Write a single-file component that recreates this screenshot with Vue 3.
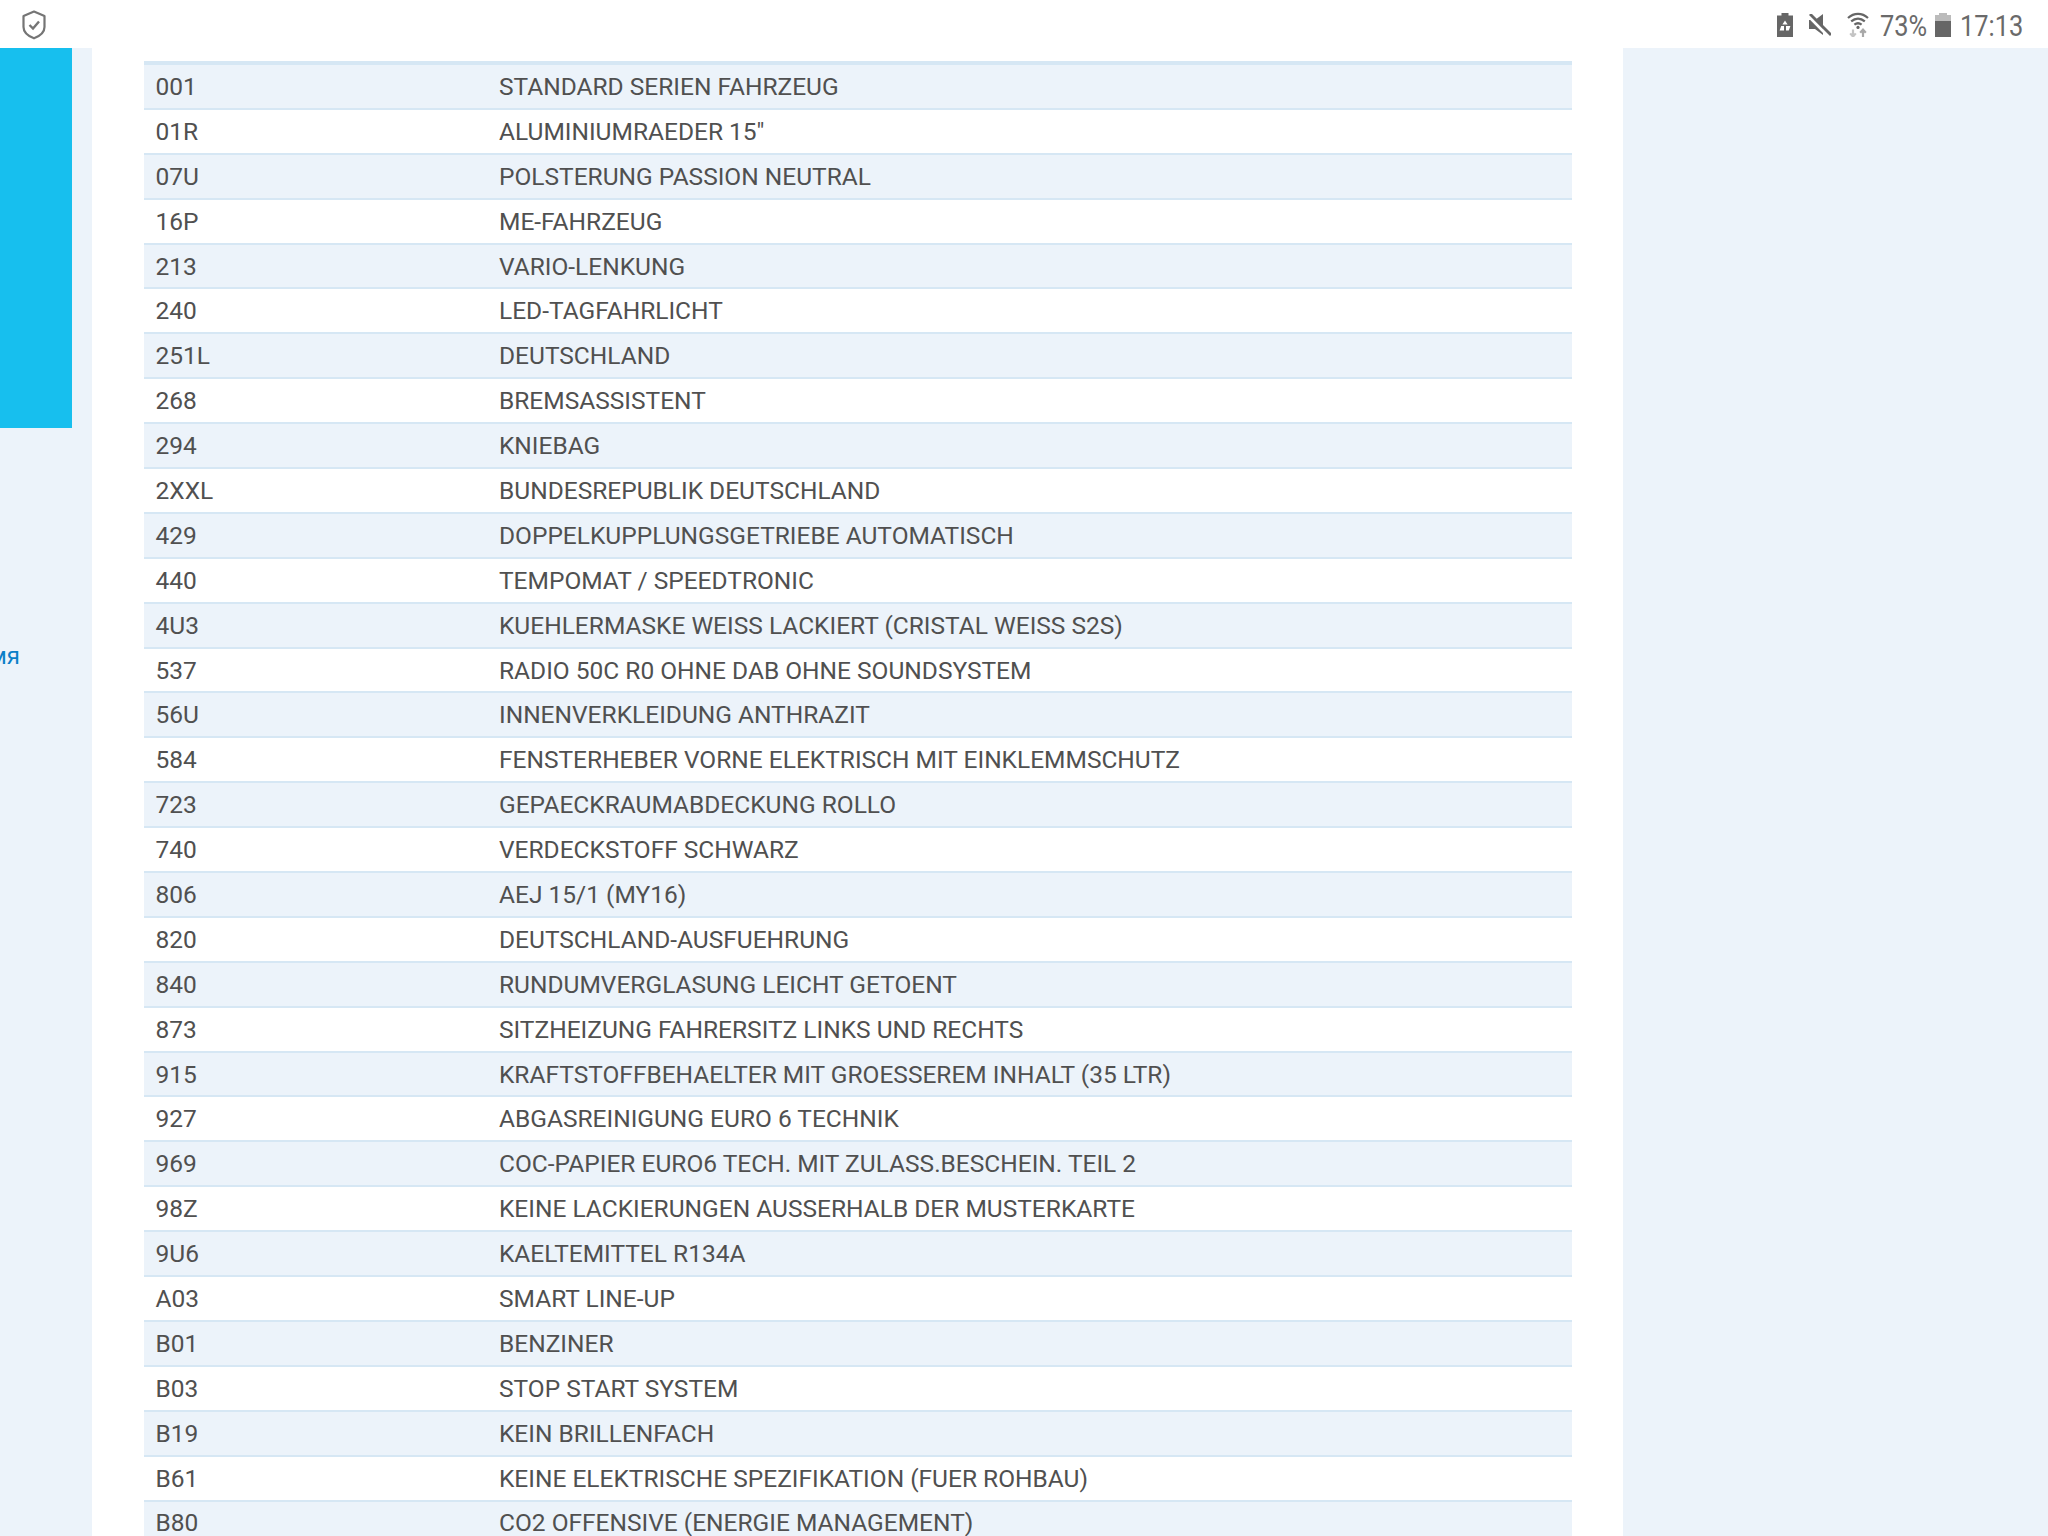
<script setup>
const rows = [
  ['001', 'STANDARD SERIEN FAHRZEUG'],
  ['01R', 'ALUMINIUMRAEDER 15"'],
  ['07U', 'POLSTERUNG PASSION NEUTRAL'],
  ['16P', 'ME-FAHRZEUG'],
  ['213', 'VARIO-LENKUNG'],
  ['240', 'LED-TAGFAHRLICHT'],
  ['251L', 'DEUTSCHLAND'],
  ['268', 'BREMSASSISTENT'],
  ['294', 'KNIEBAG'],
  ['2XXL', 'BUNDESREPUBLIK DEUTSCHLAND'],
  ['429', 'DOPPELKUPPLUNGSGETRIEBE AUTOMATISCH'],
  ['440', 'TEMPOMAT / SPEEDTRONIC'],
  ['4U3', 'KUEHLERMASKE WEISS LACKIERT (CRISTAL WEISS S2S)'],
  ['537', 'RADIO 50C R0 OHNE DAB OHNE SOUNDSYSTEM'],
  ['56U', 'INNENVERKLEIDUNG ANTHRAZIT'],
  ['584', 'FENSTERHEBER VORNE ELEKTRISCH MIT EINKLEMMSCHUTZ'],
  ['723', 'GEPAECKRAUMABDECKUNG ROLLO'],
  ['740', 'VERDECKSTOFF SCHWARZ'],
  ['806', 'AEJ 15/1 (MY16)'],
  ['820', 'DEUTSCHLAND-AUSFUEHRUNG'],
  ['840', 'RUNDUMVERGLASUNG LEICHT GETOENT'],
  ['873', 'SITZHEIZUNG FAHRERSITZ LINKS UND RECHTS'],
  ['915', 'KRAFTSTOFFBEHAELTER MIT GROESSEREM INHALT (35 LTR)'],
  ['927', 'ABGASREINIGUNG EURO 6 TECHNIK'],
  ['969', 'COC-PAPIER EURO6 TECH. MIT ZULASS.BESCHEIN. TEIL 2'],
  ['98Z', 'KEINE LACKIERUNGEN AUSSERHALB DER MUSTERKARTE'],
  ['9U6', 'KAELTEMITTEL R134A'],
  ['A03', 'SMART LINE-UP'],
  ['B01', 'BENZINER'],
  ['B03', 'STOP START SYSTEM'],
  ['B19', 'KEIN BRILLENFACH'],
  ['B61', 'KEINE ELEKTRISCHE SPEZIFIKATION (FUER ROHBAU)'],
  ['B80', 'CO2 OFFENSIVE (ENERGIE MANAGEMENT)'],
]
</script>

<template>
  <div class="page">
    <header class="status">
      <svg class="shield" width="26" height="30" viewBox="0 0 26 30" fill="none" stroke="#757575">
        <path d="M13 1.5 L23.5 6 V17 C23.5 22 19 26 13 28.3 C7 26 2.5 22 2.5 17 V6 Z" stroke-width="2.2" stroke-linejoin="round" />
        <path d="M8.5 15 L12 18.5 L18 11.5" stroke-width="2.4" />
      </svg>
      <div class="tray">
        <svg width="16" height="24" viewBox="0 0 16 24" class="i-saver">
          <path d="M4.5 0 H11.5 V2.5 H16 V24 H0 V2.5 H4.5 Z" fill="#666" />
          <path d="M8 7.5 L10.6 11.4 H5.4 Z M4.2 13 H7 V17.5 H2.6 Z M9 13 H13.4 L11.8 17.5 H9 Z" fill="#fff" />
        </svg>
        <svg width="22" height="22" viewBox="0 0 22 22" class="i-mute">
          <path d="M0 6 H6 L14 0 V21 L6 15 H0 Z" fill="#666" />
          <path d="M0 2.6 L19 22" stroke="#fff" stroke-width="3" />
          <path d="M1 0 L22 21" stroke="#666" stroke-width="2.8" />
        </svg>
        <svg width="22" height="25" viewBox="0 0 22 25" class="i-wifi" fill="none">
          <path d="M1 6 C7 0.5 15 0.5 21 6" stroke="#666" stroke-width="2.2" />
          <path d="M4.2 9.4 C8.4 5.8 13.6 5.8 17.8 9.4" stroke="#666" stroke-width="2.2" />
          <path d="M7.4 12.6 C9.8 10.8 12.2 10.8 14.6 12.6" stroke="#666" stroke-width="2.2" />
          <circle cx="11" cy="15.4" r="1.6" fill="#666" />
          <path d="M6 17.5 V24 M3.2 21.4 L6 24.6 L8.8 21.4" stroke="#c4c4c4" stroke-width="2.2" />
          <path d="M16 25 V18 M13.2 20.8 L16 17.6 L18.8 20.8" stroke="#a8a8a8" stroke-width="2.2" />
        </svg>
        <span class="pct">73%</span>
        <div class="battery"><i class="cap"></i><i class="empty"></i><i class="fill"></i></div>
        <span class="time">17:13</span>
      </div>
    </header>
    <div class="body">
      <aside class="left">
        <div class="cyan"></div>
        <a class="link"><span>имя</span></a>
      </aside>
      <main class="center">
        <table class="spec">
          <tbody>
            <tr v-for="r in rows" :key="r[0]">
              <td class="code">{{ r[0] }}</td>
              <td>{{ r[1] }}</td>
            </tr>
          </tbody>
        </table>
      </main>
      <aside class="right"></aside>
    </div>
  </div>
</template>

<style>
html, body { margin: 0; background: #fff; overflow: hidden; }
</style>

<style scoped>
.page {
  width: 2048px;
  height: 1536px;
  overflow: hidden;
  background: #fff;
  font-family: Roboto, "Liberation Sans", sans-serif;
  display: flex;
  flex-direction: column;
}
.status {
  height: 48px;
  flex: none;
  display: flex;
  align-items: flex-start;
  justify-content: space-between;
  padding: 0 24px 0 21px;
  box-sizing: border-box;
}
.shield { margin-top: 10px; }
.tray {
  display: flex;
  align-items: flex-start;
  color: #6a6a6a;
}
.i-saver { margin-top: 13px; }
.i-mute { margin: 14px 0 0 16px; }
.i-wifi { margin: 12px 0 0 16px; }
.pct, .time {
  font-size: 29.5px;
  line-height: 30px;
  margin-top: 11px;
  white-space: nowrap;
  transform-origin: left center;
  transform: scaleX(0.86);
}
.pct { width: 48px; margin-left: 11px; }
.time { width: 64px; margin-left: 9px; }
.battery {
  width: 16px;
  height: 24px;
  margin: 13px 0 0 7px;
  display: flex;
  flex-direction: column;
  align-items: center;
}
.cap { width: 8px; height: 2px; background: #bbb; display: block; }
.empty { width: 16px; height: 6px; background: #bbb; display: block; }
.fill { width: 16px; height: 16px; background: #666; display: block; }
.body { flex: 1; display: flex; min-height: 0; }
.left {
  width: 92px;
  flex: none;
  background: #ecf3fa;
  display: flex;
  flex-direction: column;
}
.cyan { width: 72px; height: 380px; background: #17bfee; flex: none; }
.link {
  width: 20px;
  margin-top: 214px;
  overflow: hidden;
  display: flex;
  justify-content: flex-end;
  color: #0a7fc8;
  font-size: 24px;
  line-height: 28px;
}
.center {
  width: 1531px;
  flex: none;
  box-sizing: border-box;
  padding: 13px 0 0 52px;
  overflow: hidden;
}
.right { flex: 1; background: #ecf3fa; }
.spec {
  width: 1428px;
  border-collapse: separate;
  border-spacing: 0;
  border-top: 4px solid #d6e7f4;
  color: #505050;
  font-size: 24.5px;
}
.spec td {
  height: 44.9px;
  box-sizing: border-box;
  padding: 0 12px 0 12px;
  border-bottom: 2px solid #d6e7f4;
  white-space: nowrap;
}
.spec td.code { width: 343px; padding-left: 11.5px; padding-right: 12.5px; }
.spec tr:nth-child(odd) td { background: #ecf3fa; }
</style>
